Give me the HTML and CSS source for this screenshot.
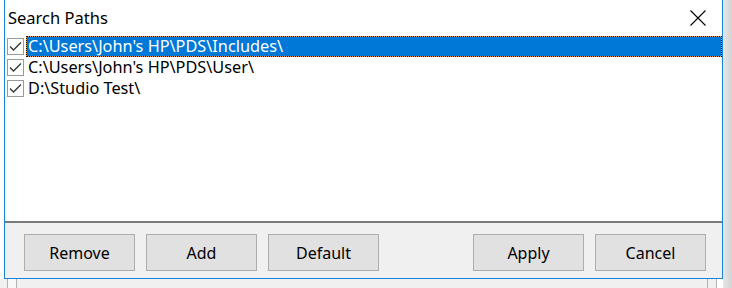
FILE: index.html
```html
<!DOCTYPE html>
<html>
<head>
    <link rel="stylesheet" href="styles.css">
</head>
<body>
    <div class="dialog">
        <div class="title-bar">
            <span class="title">Search Paths</span>
            <svg class="close-icon" width="16" height="16" viewBox="0 0 16 16">
                <path d="M0.5 0.5 L15.5 15.5 M15.5 0.5 L0.5 15.5" stroke="#000" stroke-width="1.1" fill="none"/>
            </svg>
        </div>

        <div class="path-list">
            <div class="path-row">
                <span class="check-box"><svg width="15" height="15" viewBox="0 0 15 15"><path d="M2 7.5 L5.5 11 L13 3.5" stroke="#333" stroke-width="1.3" fill="none"/></svg></span>
                <span class="path-text selected">C:\Users\John's HP\PDS\Includes\</span>
            </div>
            <div class="path-row">
                <span class="check-box"><svg width="15" height="15" viewBox="0 0 15 15"><path d="M2 7.5 L5.5 11 L13 3.5" stroke="#333" stroke-width="1.3" fill="none"/></svg></span>
                <span class="path-text">C:\Users\John's HP\PDS\User\</span>
            </div>
            <div class="path-row">
                <span class="check-box"><svg width="15" height="15" viewBox="0 0 15 15"><path d="M2 7.5 L5.5 11 L13 3.5" stroke="#333" stroke-width="1.3" fill="none"/></svg></span>
                <span class="path-text">D:\Studio Test\</span>
            </div>
        </div>

        <div class="button-bar">
            <button class="dlg-button">Remove</button>
            <button class="dlg-button">Add</button>
            <button class="dlg-button">Default</button>
            <div class="spacer"></div>
            <button class="dlg-button">Apply</button>
            <button class="dlg-button">Cancel</button>
        </div>
    </div>
    <div class="desk-strip"></div>
</body>
</html>
```

FILE: styles.css
```css
/* Page behind the dialog */
body {
    margin: 0;
    width: 732px;
    height: 288px;
    overflow: hidden;
    font-family: "Noto Sans", "Open Sans", sans-serif;
    background: linear-gradient(to right, #ffffff 723px, #e6e6e6 723px, #d2d2d2 732px);
}

/* Dialog window */
.dialog {
    margin-left: 4px;
    width: 717px;
    height: 278px;
    border: 1px solid #1883d7;
    border-top: none;
    background-color: white;
    display: flex;
    flex-direction: column;
}

.title-bar {
    height: 36px;
    display: flex;
    align-items: center;
    justify-content: space-between;
    padding: 0 16px 2px 3px;
    box-sizing: border-box;
}

.title {
    font-size: 16.5px;
    color: #000;
}

.close-icon {
    display: block;
    margin-top: 1px;
}

/* Search path list */
.path-list {
    flex: 1;
    border-bottom: 2px solid #7a7a7a;
}

.path-row {
    height: 21px;
    display: flex;
    align-items: center;
    font-size: 16.3px;
}

.check-box {
    width: 15px;
    height: 15px;
    margin: 0 2px 0 2px;
    border: 1px solid #9a9a9a;
    background: white;
    flex-shrink: 0;
}

.check-box svg {
    display: block;
}

.path-text {
    flex: 1;
    height: 21px;
    line-height: 19px;
    padding-left: 1px;
    border: 1px solid transparent;
    box-sizing: border-box;
    color: #000;
}

.path-text.selected {
    color: white;
    border: 1px dotted #000;
    background: linear-gradient(#0078d7, #0078d7) padding-box, #f7a046 border-box;
}

/* Buttons along the bottom */
.button-bar {
    height: 55px;
    background-color: #f0f0f0;
    display: flex;
    gap: 11px;
    padding: 11px 16px 0 19px;
    box-sizing: border-box;
}

.spacer {
    flex: 1;
}

.dlg-button {
    width: 111px;
    height: 37px;
    background-color: #e1e1e1;
    border: 1px solid #adadad;
    font-family: "Noto Sans", "Open Sans", sans-serif;
    font-size: 16px;
    color: #000;
    padding: 0;
}

/* Window underneath */
.desk-strip {
    height: 9px;
    width: 717px;
    background:
        linear-gradient(to right, transparent 7px, #b4b4b4 7px, #b4b4b4 8px, #f8f8f8 8px, #f8f8f8 16px, #b4b4b4 16px, #b4b4b4 17px, transparent 17px),
        linear-gradient(to right, #f0f0f0 707px, #b4b4b4 707px, #b4b4b4 708px, #f0f0f0 708px, #f0f0f0 716px, #b4b4b4 716px, #b4b4b4 717px, transparent 717px);
}
```
